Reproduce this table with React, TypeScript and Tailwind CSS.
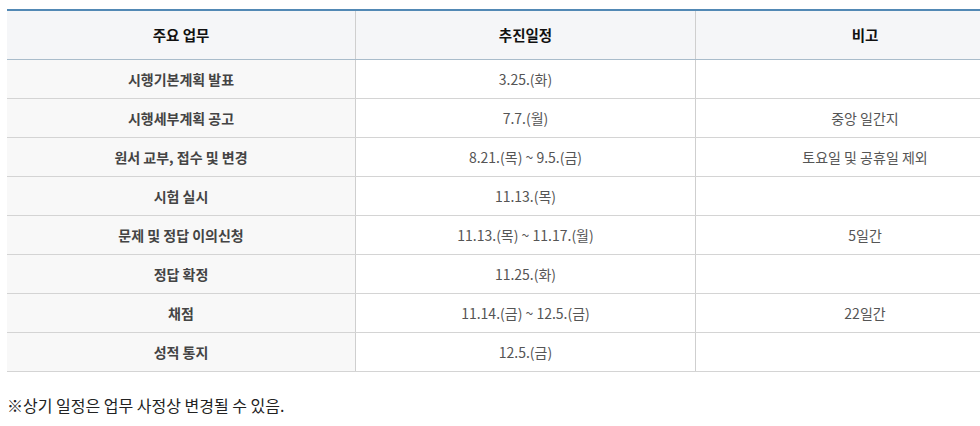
import React from "react";

const rows: [string, string, string][] = [
  ["시행기본계획 발표", "3.25.(화)", ""],
  ["시행세부계획 공고", "7.7.(월)", "중앙 일간지"],
  ["원서 교부, 접수 및 변경", "8.21.(목) ~ 9.5.(금)", "토요일 및 공휴일 제외"],
  ["시험 실시", "11.13.(목)", ""],
  ["문제 및 정답 이의신청", "11.13.(목) ~ 11.17.(월)", "5일간"],
  ["정답 확정", "11.25.(화)", ""],
  ["채점", "11.14.(금) ~ 12.5.(금)", "22일간"],
  ["성적 통지", "12.5.(금)", ""],
];

const font = { fontFamily: '"Noto Sans CJK KR", "Noto Sans", sans-serif' };

export default function App() {
  return (
    <div className="w-[980px] h-[426px] overflow-hidden bg-white" style={font}>
      <div className="pt-[9px] pl-[7px]">
        <div className="w-[1027px] border-t-2 border-[#5289b5]">
          <div className="flex h-[49px] bg-[#f5f6f8] border-b border-[#a9bccb] text-[14.5px] font-bold text-[#111]">
            <div className="w-[349px] flex items-center justify-center border-r border-[#cfcfcf]">주요 업무</div>
            <div className="w-[340px] flex items-center justify-center border-r border-[#cfcfcf]">추진일정</div>
            <div className="flex-1 flex items-center justify-center">비고</div>
          </div>
          {rows.map((r, i) => (
            <div key={i} className="flex h-[39px] border-b border-[#d4d4d4] text-[14px]">
              <div className="w-[349px] flex items-center justify-center border-r border-[#cfcfcf] bg-[#f8f8f8] font-bold text-[#444]">
                {r[0]}
              </div>
              <div className="w-[340px] flex items-center justify-center border-r border-[#cfcfcf] text-[#555]">
                {r[1]}
              </div>
              <div className="flex-1 flex items-center justify-center text-[#555]">{r[2]}</div>
            </div>
          ))}
        </div>
        <div className="mt-[23px] text-[16px] text-[#222] leading-[20px]">※상기 일정은 업무 사정상 변경될 수 있음.</div>
      </div>
    </div>
  );
}
